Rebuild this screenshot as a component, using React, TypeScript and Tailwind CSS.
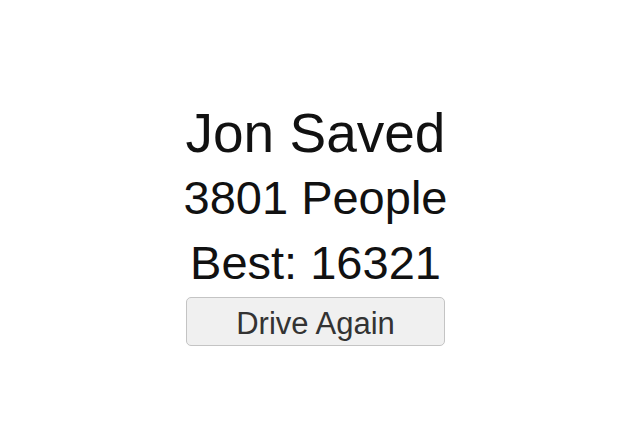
export default function App() {
  return (
    <div className="w-[640px] h-[430px] bg-white flex" style={{ fontFamily: '"Liberation Sans", Arial, sans-serif' }}>
      <div className="w-[631px] flex flex-col items-center pt-[101px]">
        <div className="text-[55px] leading-[64px] text-[#111]">Jon Saved</div>
        <div className="text-[47px] leading-[65px] text-[#111]">3801 People</div>
        <div className="text-[47px] leading-[65px] text-[#111]">Best: 16321</div>
        <button className="mt-[2px] w-[259px] h-[49px] pt-[3px] bg-[#f0f0f0] border border-[#c4c4c4] rounded-[5px] text-[31px] leading-none text-[#333]">Drive Again</button>
      </div>
    </div>
  );
}
